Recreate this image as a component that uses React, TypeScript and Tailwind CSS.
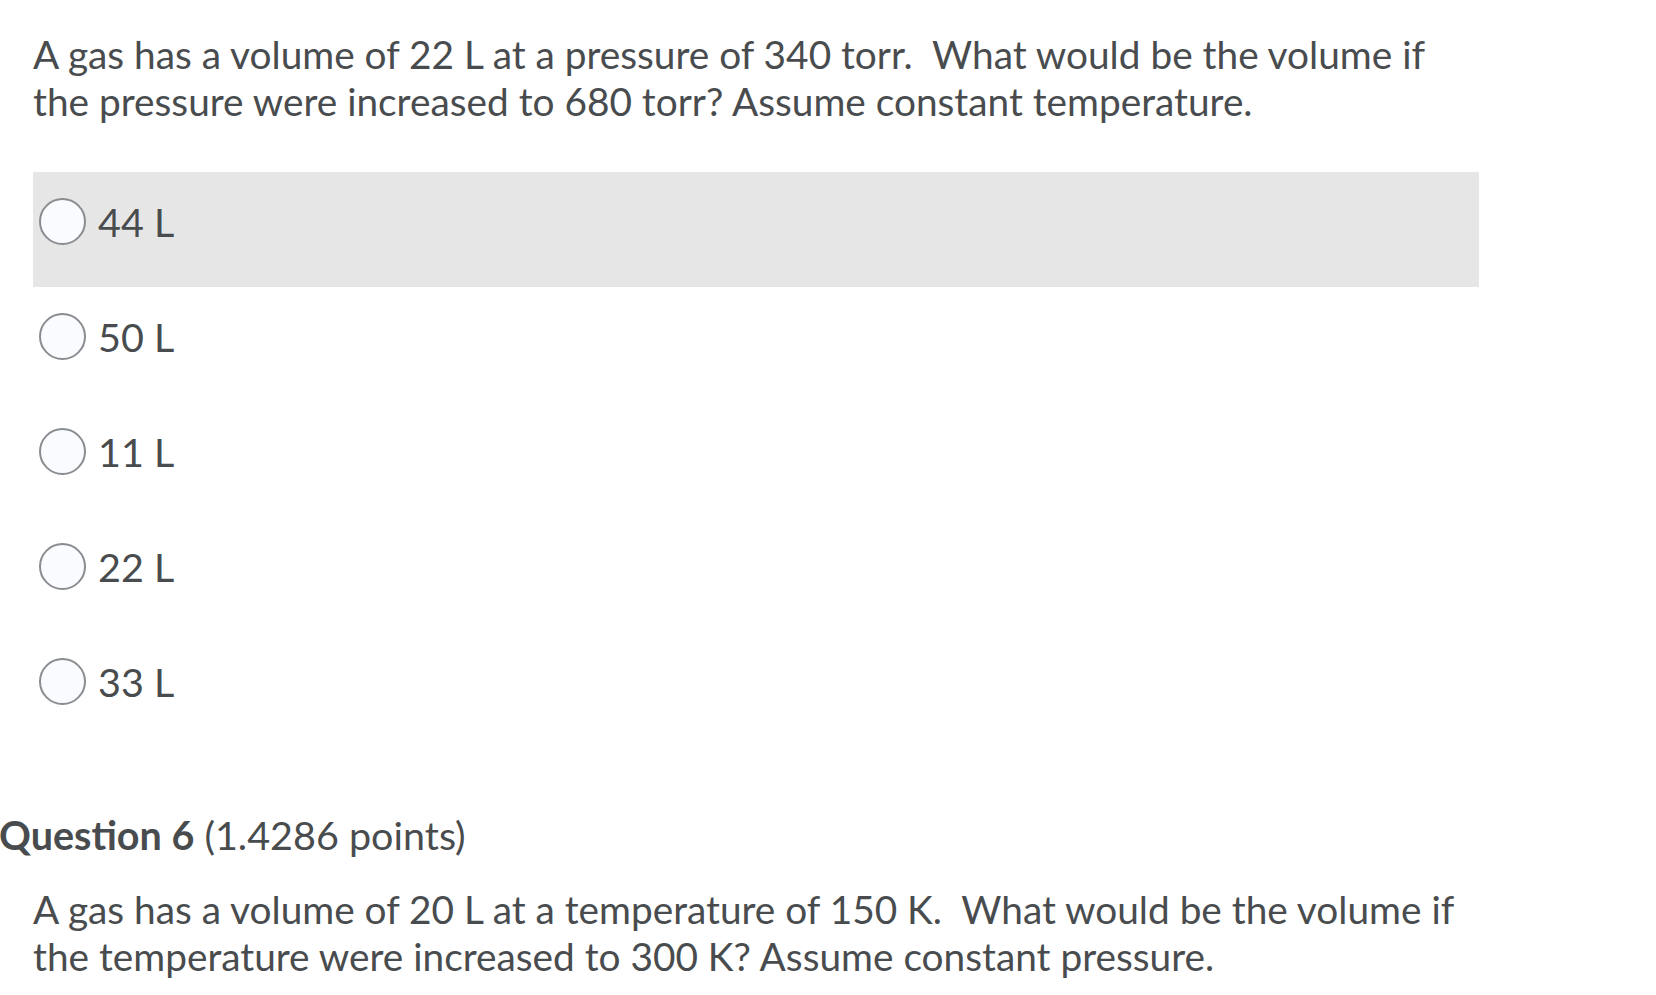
import React from "react";

const options = ["44 L", "50 L", "11 L", "22 L", "33 L"];

export default function App() {
  return (
    <div className="w-[1656px] h-[995px] overflow-hidden bg-white text-[#494c4e] font-['Lato','Open_Sans',sans-serif]">
      <div className="pl-[33px] pt-[31px]">
        <p className="text-[38.8px] leading-[47px] w-[1450px]">
          A gas has a volume of 22 L at a pressure of 340 torr.&nbsp; What would be the volume if the pressure were increased to 680 torr? Assume constant temperature.
        </p>
        <div className="mt-[47px] w-[1446px] flex flex-col">
          {options.map((o, i) => (
            <div
              key={o}
              className={
                i === 0
                  ? "h-[115px] flex items-start pt-[26px] pl-[6px] bg-[#e6e6e6]"
                  : "h-[115px] flex items-start pt-[26px] pl-[6px]"
              }
            >
              <div className="flex items-center gap-[12px]">
                <span className="w-[47px] h-[47px] rounded-full border-[2px] border-[#8a8d90] bg-[#f9fbff] shrink-0" />
                <span className="text-[39.5px] leading-[47px]">{o}</span>
              </div>
            </div>
          ))}
        </div>
      </div>
      <div className="mt-[64px] -ml-[1px] text-[39.5px] leading-[47px]">
        <span className="font-bold">Question 6</span> (1.4286 points)
      </div>
      <p className="pl-[33px] mt-[28px] text-[38.8px] leading-[47px] w-[1480px]">
        A gas has a volume of 20 L at a temperature of 150 K.&nbsp; What would be the volume if the temperature were increased to 300 K? Assume constant pressure.
      </p>
    </div>
  );
}
